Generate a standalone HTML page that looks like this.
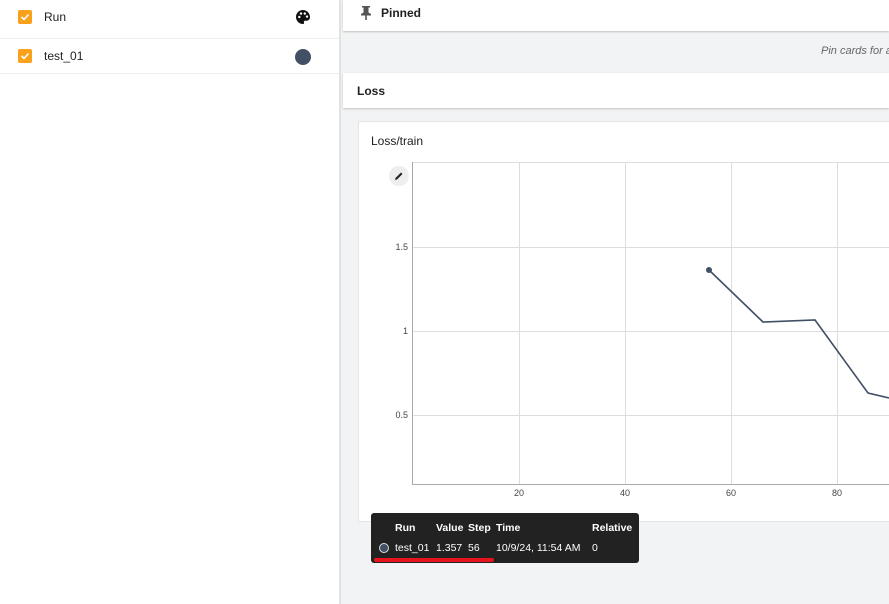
<!DOCTYPE html>
<html><head><meta charset="utf-8"><style>
*{margin:0;padding:0;box-sizing:border-box}
body{width:889px;height:604px;overflow:hidden;font-family:"Liberation Sans",sans-serif;background:#f1f3f4;position:relative;color:#212121}
.abs{position:absolute}
.cb{position:absolute;left:18px;width:14px;height:14px;background:#f9a11b;border-radius:2px}
.cb svg{position:absolute;left:2px;top:2px}
</style></head><body>
<div class="abs" style="left:0;top:0;width:341px;height:604px;background:#fff;border-right:2px solid #e2e2e2"></div>
<div class="abs" style="left:0;top:38px;width:339px;height:1px;background:#eee"></div>
<div class="abs" style="left:0;top:73px;width:339px;height:1px;background:#eee"></div>
<div class="cb" style="top:10px"><svg width="10" height="10"><path d="M1.5 5 L4 7.5 L8.5 2.5" stroke="#fff" stroke-width="1.6" fill="none"/></svg></div>
<div class="abs" style="left:44px;top:10px;font-size:12px">Run</div>
<svg class="abs" style="left:295px;top:9px" width="16" height="16" viewBox="0 0 16 16"><path d="M8 1a7 7 0 0 0 0 14c1 0 1.4-.7 1-1.5-.4-.8 0-1.7 1-1.7h1.5A3.5 3.5 0 0 0 15 8.3C15 4.3 11.9 1 8 1z" fill="#111"/><circle cx="4.3" cy="8" r="1.2" fill="#fff"/><circle cx="6" cy="4.6" r="1.2" fill="#fff"/><circle cx="9.8" cy="4.6" r="1.2" fill="#fff"/><circle cx="12" cy="7.6" r="1.2" fill="#fff"/></svg>
<div class="cb" style="top:49px"><svg width="10" height="10"><path d="M1.5 5 L4 7.5 L8.5 2.5" stroke="#fff" stroke-width="1.6" fill="none"/></svg></div>
<div class="abs" style="left:44px;top:49px;font-size:12px">test_01</div>
<div class="abs" style="left:295px;top:49px;width:16px;height:16px;border-radius:50%;background:#425066"></div>

<div class="abs" style="left:343px;top:0;width:546px;height:31px;background:#fff;box-shadow:0 1px 2px rgba(0,0,0,.2)"></div>
<svg class="abs" style="left:360px;top:5px" width="12" height="16" viewBox="0 0 12 16"><path d="M2 1h8v1.5H8.5v5L11 9v1.5H6.8V15H5.2V10.5H1V9l2.5-1.5v-5H2z" fill="#555"/></svg>
<div class="abs" style="left:381px;top:6px;font-size:12px;font-weight:bold">Pinned</div>
<div class="abs" style="left:821px;top:45px;font-size:11px;font-style:italic;color:#666;white-space:nowrap">Pin cards for a</div>
<div class="abs" style="left:343px;top:73px;width:546px;height:35px;background:#fff;box-shadow:0 1px 2px rgba(0,0,0,.2)"></div>
<div class="abs" style="left:357px;top:84px;font-size:12px;font-weight:bold">Loss</div>
<div class="abs" style="left:358px;top:121px;width:560px;height:401px;background:#fff;border:1px solid #e4e4e4"></div>
<div class="abs" style="left:371px;top:134px;font-size:12px">Loss/train</div>
<div class="abs" style="left:389px;top:166px;width:20px;height:20px;border-radius:50%;background:#eee"></div>
<svg class="abs" style="left:394px;top:171px" width="10" height="10"><path d="M1 9 L1.5 7 L7 1.5 L8.5 3 L3 8.5z" fill="#222"/></svg>
<svg class="abs" style="left:0;top:0" width="889" height="604">
<g stroke="#ddd" stroke-width="1">
<line x1="519.5" y1="162" x2="519.5" y2="485"/><line x1="625.5" y1="162" x2="625.5" y2="485"/><line x1="731.5" y1="162" x2="731.5" y2="485"/><line x1="837.5" y1="162" x2="837.5" y2="485"/>
<line x1="412" y1="162.5" x2="889" y2="162.5"/>
<line x1="412" y1="247.5" x2="889" y2="247.5"/><line x1="412" y1="331.5" x2="889" y2="331.5"/><line x1="412" y1="415.5" x2="889" y2="415.5"/>
</g>
<line x1="412.5" y1="162" x2="412.5" y2="485" stroke="#aaa"/>
<line x1="412" y1="484.5" x2="889" y2="484.5" stroke="#aaa"/>
<g font-size="9" fill="#444" font-family="Liberation Sans">
<text x="408" y="250" text-anchor="end">1.5</text><text x="408" y="334" text-anchor="end">1</text><text x="408" y="418" text-anchor="end">0.5</text>
<text x="519" y="496" text-anchor="middle">20</text><text x="625" y="496" text-anchor="middle">40</text><text x="731" y="496" text-anchor="middle">60</text><text x="837" y="496" text-anchor="middle">80</text>
</g>
<polyline points="709,270 763,322 815,320 868,393 889,398" fill="none" stroke="#425066" stroke-width="1.6"/>
<circle cx="709" cy="270" r="3" fill="#425066"/>
</svg>
<div class="abs" style="left:371px;top:513px;width:268px;height:50px;background:#222;border-radius:3px;color:#fff;font-size:10.5px">
<div class="abs" style="left:24px;top:9px;font-weight:bold">Run</div>
<div class="abs" style="left:65px;top:9px;font-weight:bold">Value</div>
<div class="abs" style="left:97px;top:9px;font-weight:bold">Step</div>
<div class="abs" style="left:125px;top:9px;font-weight:bold">Time</div>
<div class="abs" style="left:221px;top:9px;font-weight:bold">Relative</div>
<div class="abs" style="left:8px;top:30px;width:10px;height:10px;border-radius:50%;background:#425066;border:1.5px solid #ddd"></div>
<div class="abs" style="left:24px;top:29px">test_01</div>
<div class="abs" style="left:65px;top:29px">1.357</div>
<div class="abs" style="left:97px;top:29px">56</div>
<div class="abs" style="left:125px;top:29px;white-space:nowrap">10/9/24, 11:54 AM</div>
<div class="abs" style="left:221px;top:29px">0</div>
</div>
<div class="abs" style="left:374px;top:558px;width:120px;height:4px;background:#e8141d;border-radius:2px"></div>
</body></html>
